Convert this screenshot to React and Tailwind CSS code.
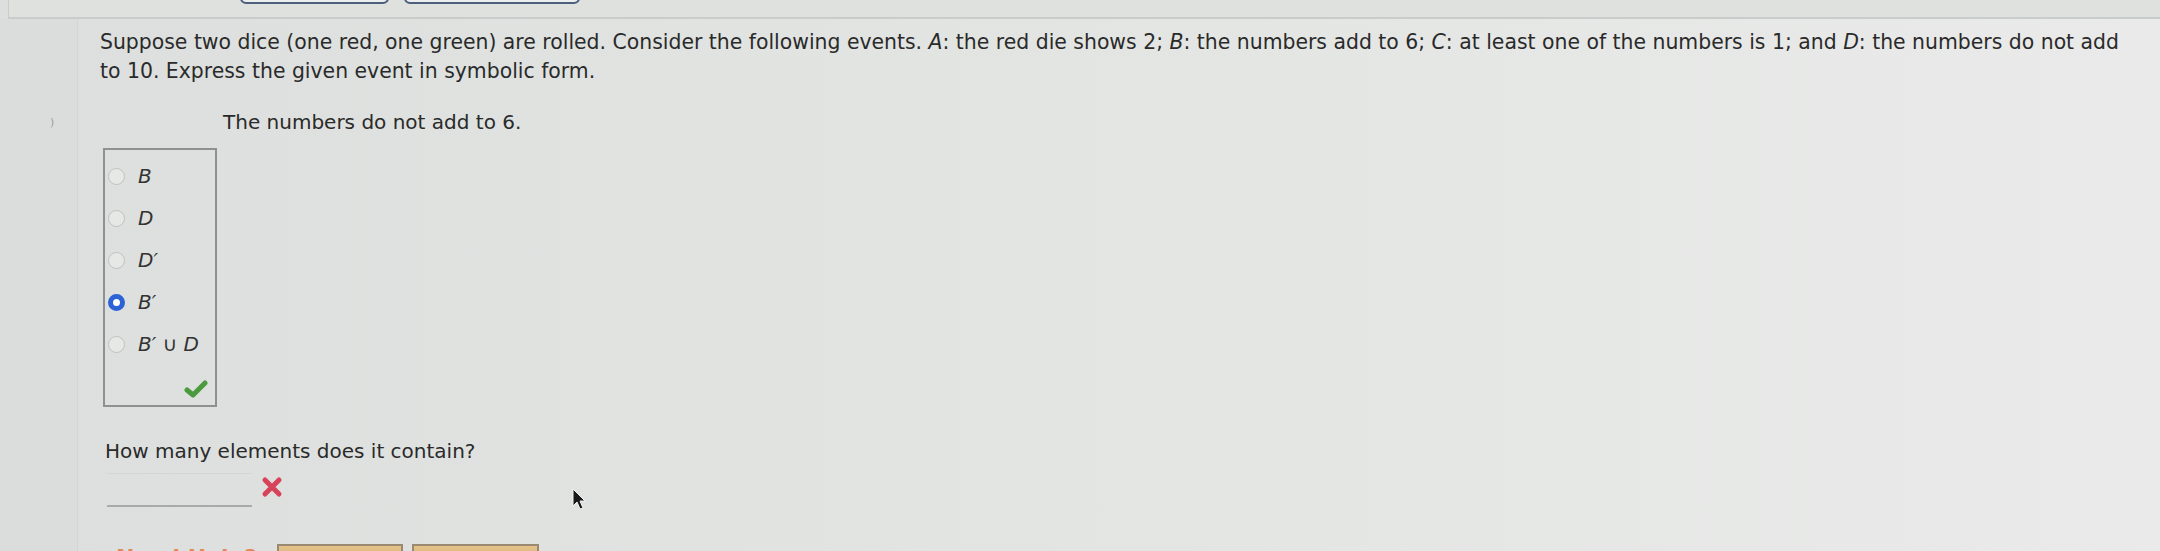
import React from 'react';

const options = [
    { label: <>B</>, checked: false },
    { label: <>D</>, checked: false },
    { label: <>D′</>, checked: false },
    { label: <>B′</>, checked: true },
    { label: <>B′ <span className="not-italic">∪</span> D</>, checked: false },
];

const Radio = ({ checked }) => (
    checked
        ? <span className="w-[17px] h-[17px] rounded-full border-[5px] border-[#2b62d6] bg-white shrink-0" />
        : <span className="w-[17px] h-[17px] rounded-full border-[1.5px] border-[#bec1bf] bg-[#e6e8e6] shrink-0" />
);

export default function App() {
    return (
        <div
            className="relative w-[2160px] h-[551px] overflow-hidden bg-gradient-to-r from-[#dcdfdd] via-[#e3e5e3] to-[#e9eae9] text-[#2a2a2a]"
            style={{ fontFamily: '"DejaVu Sans", Verdana, sans-serif' }}
        >
            {/* header strip with the bottoms of two buttons */}
            <div className="ml-[8px] h-[19px] border-l border-b-2 border-[#c9ccca] bg-[#dfe1df] flex pl-[231px] gap-[15px]">
                <div className="w-[149px] h-[30px] -mt-[26px] rounded-b-[6px] border-2 border-[#4d5f7c] bg-[#eceeee]" />
                <div className="w-[176px] h-[30px] -mt-[26px] rounded-b-[6px] border-2 border-[#4d5f7c] bg-[#eceeee]" />
            </div>

            <div className="flex">
                {/* left gutter */}
                <div className="w-[78px] shrink-0 h-[540px] border-r border-[#d2d5d3] bg-[#dadddb] relative">
                    <span className="absolute left-[50px] top-[96px] text-[11px] text-[#9a9d9b]">)</span>
                </div>

                {/* question */}
                <div className="pl-[22px] pt-[9px]">
                    <p className="w-[2040px] text-[20.4px] leading-[29px]">
                        Suppose two dice (one red, one green) are rolled. Consider the following events. <i>A</i>: the red die shows 2; <i>B</i>: the numbers add to 6; <i>C</i>: at least one of the numbers is 1; and <i>D</i>: the numbers do not add to 10. Express the given event in symbolic form.
                    </p>

                    <p className="mt-[22px] ml-[123px] text-[20px] leading-[29px]">The numbers do not add to 6.</p>

                    <div className="mt-[11px] ml-[3px] w-[114px] border-2 border-[#8d9290] pt-[5px] pb-[5px]">
                        {options.map((o, i) => (
                            <div key={i} className="h-[42px] flex items-center pl-[3px] gap-[13px]">
                                <Radio checked={o.checked} />
                                <span className="italic text-[20px] leading-none text-[#333]">{o.label}</span>
                            </div>
                        ))}
                        <div className="mt-[11px] flex justify-end pr-[7px]">
                            <svg width="24" height="24" viewBox="0 0 24 24">
                                <path d="M3 14 L9 19 L21 7" fill="none" stroke="#4b9a3e" strokeWidth="5" strokeLinecap="round" strokeLinejoin="round" />
                            </svg>
                        </div>
                    </div>

                    <p className="mt-[30px] ml-[5px] text-[20px] leading-[29px]">How many elements does it contain?</p>

                    <div className="mt-[7px] ml-[7px] flex items-center gap-[9px]">
                        <input
                            type="text"
                            className="w-[145px] h-[34px] border-t border-t-[#d3d6d4] border-b-2 border-b-[#a7aaa8] bg-transparent outline-none"
                        />
                        <svg width="22" height="22" viewBox="0 0 22 22" className="mt-[-6px]">
                            <path d="M4 4 L18 18 M18 4 L4 18" stroke="#d8435b" strokeWidth="5" strokeLinecap="round" />
                        </svg>
                    </div>

                    <div className="mt-[37px] flex items-start">
                        <span className="ml-[16px] w-[161px] pt-[3px] text-[22px] leading-none font-bold text-[#e08a5a]">Need Help?</span>
                        <div className="flex gap-[9px]">
                            <div className="w-[126px] h-[30px] border-2 border-[#9b8a72] bg-gradient-to-b from-[#e4c28a] to-[#cfa35c]" />
                            <div className="w-[127px] h-[30px] border-2 border-[#9b8a72] bg-gradient-to-b from-[#e4c28a] to-[#cfa35c]" />
                        </div>
                    </div>
                </div>
            </div>

            {/* mouse pointer */}
            <svg className="absolute left-[571px] top-[488px]" width="16" height="24" viewBox="0 0 16 24">
                <path d="M2 1 L2 18 L6 14 L9 21 L12 20 L9 13 L14 13 Z" fill="#1a1a1a" stroke="#f2f2f2" strokeWidth="1" />
            </svg>
        </div>
    );
}
